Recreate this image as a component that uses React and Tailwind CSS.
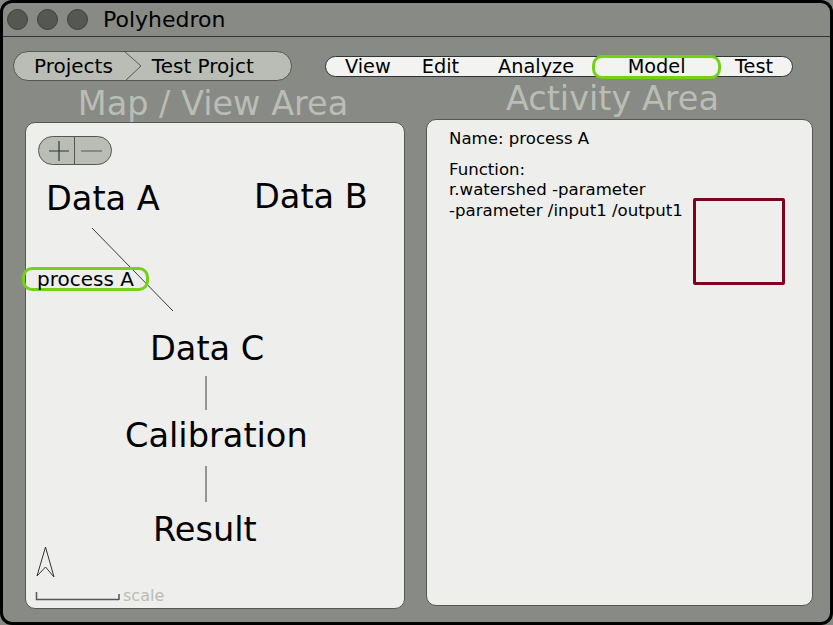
import React from 'react';

const font = { fontFamily: '"DejaVu Sans", Verdana, sans-serif' };

const menu = [
  { label: 'View', cls: 'ml-[19px]' },
  { label: 'Edit', cls: 'ml-[31px]' },
  { label: 'Analyze', cls: 'ml-[39px]' },
];

// nodes on the map canvas (free placement, relative to panel)
const nodes = [
  { label: 'Data A', cls: 'left-[20px] top-[59px]' },
  { label: 'Data B', cls: 'left-[228px] top-[57px]' },
  { label: 'Data C', cls: 'left-[124px] top-[209px]' },
  { label: 'Calibration', cls: 'left-[99px] top-[296px]' },
  { label: 'Result', cls: 'left-[127px] top-[390px]' },
];

const App = () => {
  return (
    <div className="w-[833px] h-[625px] bg-[#888a85] text-black" style={font}>
      <div className="w-full h-full border-[3px] border-black rounded-[12px] overflow-hidden flex flex-col">
        {/* Title bar */}
        <div className="h-[34px] border-b border-[#2e3436] flex items-center shrink-0">
          <div className="flex gap-[9px] ml-[4px] -mt-[1px]">
            {[0, 1, 2].map((i) => (
              <div key={i} className="w-[21px] h-[21px] rounded-full bg-[#555753] border border-[#3d403b]"></div>
            ))}
          </div>
          <span className="ml-[15px] text-[22px] leading-none">Polyhedron</span>
        </div>

        {/* Breadcrumb + menu */}
        <div className="flex items-start pt-[14px] pl-[10px] shrink-0">
          <div className="h-[30px] w-[279px] rounded-full bg-[#babdb6] border border-[#555753] flex items-center text-[20px] leading-none">
            <span className="ml-[20px]">Projects</span>
            <svg width="18" height="30" viewBox="0 0 18 30" className="ml-[11px] -my-px shrink-0">
              <path d="M0 0 L17 15 L1 30" fill="none" stroke="#555753" strokeWidth="1" />
            </svg>
            <span className="ml-[10px]">Test Projct</span>
          </div>
          <div className="ml-[33px] mt-[5px] h-[21px] w-[468px] rounded-full bg-[#f3f3f1] border border-[#2e3436] flex items-center text-[19.3px] leading-none">
            {menu.map((m) => (
              <span key={m.label} className={m.cls}>{m.label}</span>
            ))}
            <span className="ml-[18px] -my-[2px] h-[24px] w-[129px] border-[3px] border-[#73d216] rounded-[10px] flex items-center justify-center">
              Model
            </span>
            <span className="ml-[14px]">Test</span>
          </div>
        </div>

        {/* Columns */}
        <div className="flex items-start pl-[22px] gap-[21px]">
          {/* Map / View column */}
          <div className="w-[380px] flex flex-col">
            <div className="mt-[6px] h-[32px] text-[33.5px] leading-none text-[#babdb6] text-center pr-[4px] whitespace-nowrap">
              Map / View Area
            </div>
            <div className="mt-[3px] h-[487px] rounded-[10px] bg-[#eeeeec] border border-[#555753] relative">
              <svg className="absolute inset-0 pointer-events-none" width="378" height="485" viewBox="0 0 378 485">
                <line x1="66" y1="105" x2="147" y2="188" stroke="#3a3a3a" strokeWidth="1" />
                <line x1="180" y1="253" x2="180" y2="287" stroke="#3a3a3a" strokeWidth="1" />
                <line x1="180" y1="343" x2="180" y2="379" stroke="#3a3a3a" strokeWidth="1" />
                {/* north arrow */}
                <path d="M19.5 424 L11 453 L19.5 444 L28 454 Z" fill="none" stroke="#2e3436" strokeWidth="1" strokeLinejoin="miter" />
                {/* scale bar */}
                <path d="M10.5 469 L10.5 476.5 L93 476.5 M93 471 L93 477" fill="none" stroke="#555753" strokeWidth="1.5" />
              </svg>

              {/* zoom control */}
              <div className="absolute left-[12px] top-[13px] w-[74px] h-[29px] rounded-full bg-[#babdb6] border border-[#555753] flex overflow-hidden">
                <div className="w-[36px] h-full border-r border-[#555753] flex items-center justify-center">
                  <svg width="22" height="22" viewBox="0 0 22 22" className="ml-[4px]">
                    <path d="M1 11 H21 M11 1 V21" stroke="#2e3436" strokeWidth="1.2" />
                  </svg>
                </div>
                <div className="flex-1 flex items-center justify-center">
                  <svg width="22" height="4" viewBox="0 0 22 4" className="mr-[3px]">
                    <path d="M0 2 H21" stroke="#555753" strokeWidth="1.2" />
                  </svg>
                </div>
              </div>

              {nodes.map((n) => (
                <div key={n.label} className={`absolute text-[33.6px] leading-none whitespace-nowrap ${n.cls}`}>
                  {n.label}
                </div>
              ))}

              <div className="absolute -left-[4px] top-[144px] w-[127px] h-[24px] border-[3px] border-[#73d216] rounded-[10px] flex items-center">
                <span className="ml-[12px] text-[20px] leading-none whitespace-nowrap">process A</span>
              </div>

              <div className="absolute left-[97px] top-[465px] text-[16px] leading-none text-[#babdb6]">scale</div>
            </div>
          </div>

          {/* Activity column */}
          <div className="w-[387px] flex flex-col">
            <div className="mt-[1px] h-[32px] text-[33.5px] leading-none text-[#babdb6] text-center pr-[14px] whitespace-nowrap">
              Activity Area
            </div>
            <div className="mt-[5px] h-[487px] rounded-[10px] bg-[#eeeeec] border border-[#555753] pl-[22px] pt-[9px] text-[16.6px] leading-[20.5px]">
              <div>Name: process A</div>
              <div className="mt-[10px] flex items-start">
                <div className="w-[244px] whitespace-nowrap">
                  <div>Function:</div>
                  <div>r.watershed -parameter</div>
                  <div>-parameter /input1 /output1</div>
                </div>
                <div className="mt-[38px] w-[92px] h-[87px] border-[3px] border-[#800020] rounded-[2px] shrink-0"></div>
              </div>
            </div>
          </div>
        </div>
      </div>
    </div>
  );
};

export default App;
